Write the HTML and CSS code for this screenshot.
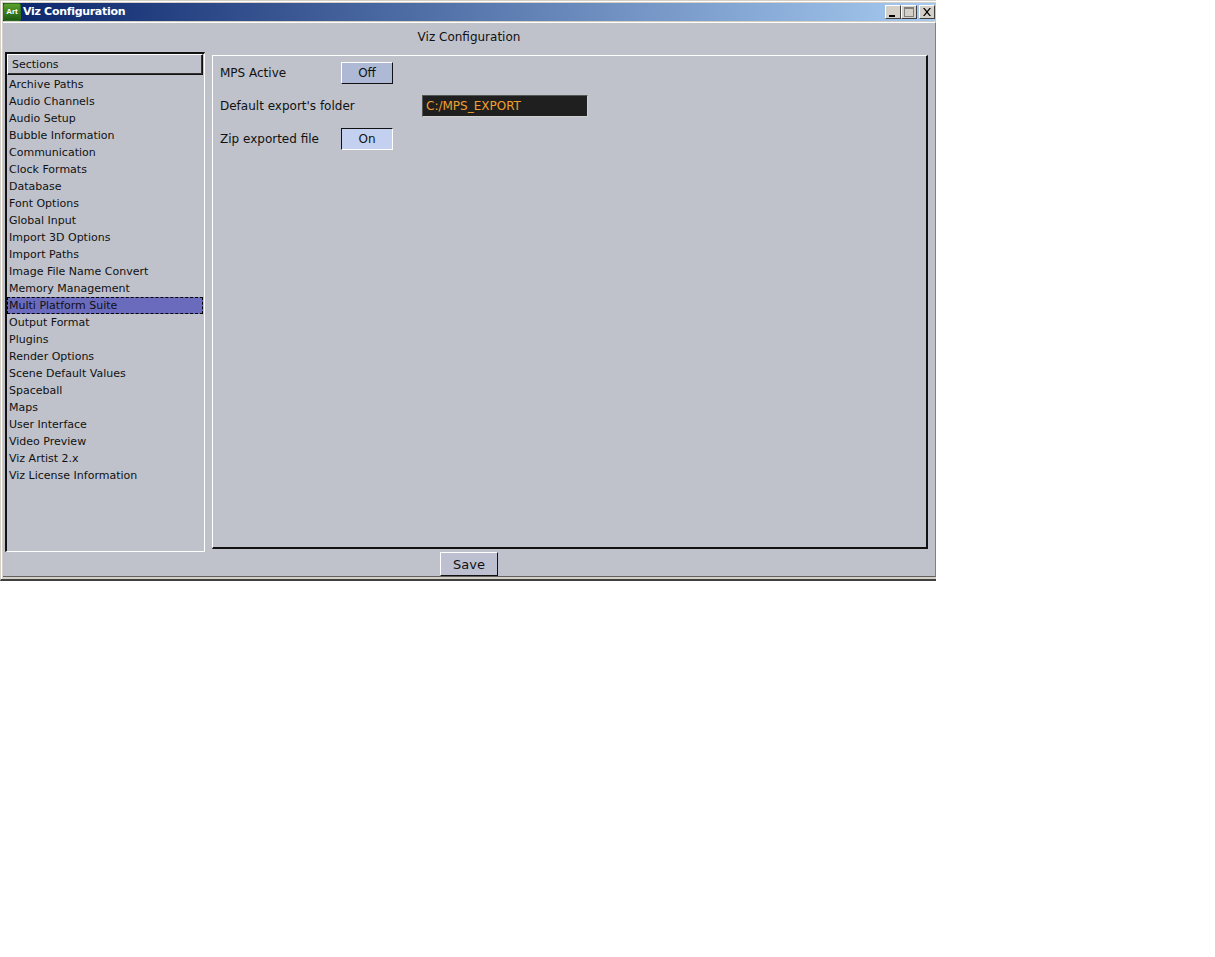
FILE: index.html
```html
<!DOCTYPE html>
<html lang="en">
<head>
<meta charset="utf-8">
<title>Viz Configuration</title>
<link rel="stylesheet" href="styles.css">
</head>
<body>
<div class="window">
  <div class="titlebar">
    <div class="appicon">Art</div>
    <div class="wintitle">Viz Configuration</div>
    <div class="winbtns">
      <div class="winbtn"><svg width="14" height="12" viewBox="0 0 14 12"><rect x="3" y="9" width="6" height="2" fill="#000"/></svg></div>
      <div class="winbtn"><svg width="14" height="12" viewBox="0 0 14 12"><rect x="2.5" y="1.5" width="9" height="9" fill="none" stroke="#808080"/><rect x="2" y="1" width="10" height="2" fill="#808080"/><rect x="4" y="4" width="7" height="6" fill="none" stroke="#fff" stroke-width="0"/></svg></div>
      <div class="winbtn close"><svg width="14" height="12" viewBox="0 0 14 12"><path d="M3 2l1.5 0 2.5 3 2.500-3 1.500 0-3.200 4 3.200 4-1.500 0-2.500-3-2.500 3-1.500 0 3.200-4z" fill="#000"/></svg></div>
    </div>
  </div>
  <div class="client">
    <div class="heading">Viz Configuration</div>
    <div class="main">
      <div class="sidebar">
        <div class="sideheader">Sections</div>
        <ul class="list">
          <li>Archive Paths</li>
          <li>Audio Channels</li>
          <li>Audio Setup</li>
          <li>Bubble Information</li>
          <li>Communication</li>
          <li>Clock Formats</li>
          <li>Database</li>
          <li>Font Options</li>
          <li>Global Input</li>
          <li>Import 3D Options</li>
          <li>Import Paths</li>
          <li>Image File Name Convert</li>
          <li>Memory Management</li>
          <li class="selected">Multi Platform Suite</li>
          <li>Output Format</li>
          <li>Plugins</li>
          <li>Render Options</li>
          <li>Scene Default Values</li>
          <li>Spaceball</li>
          <li>Maps</li>
          <li>User Interface</li>
          <li>Video Preview</li>
          <li>Viz Artist 2.x</li>
          <li>Viz License Information</li>
        </ul>
      </div>
      <div class="panel">
        <div class="row">
          <span class="label">MPS Active</span>
          <span class="toggle off">Off</span>
        </div>
        <div class="row">
          <span class="label wide">Default export's folder</span>
          <span class="field">C:/MPS_EXPORT</span>
        </div>
        <div class="row">
          <span class="label">Zip exported file</span>
          <span class="toggle on">On</span>
        </div>
      </div>
    </div>
    <div class="footer"><span class="save">Save</span></div>
  </div>
</div>
</body>
</html>
```
FILE: styles.css
```css
* { box-sizing: border-box; }
html, body { margin: 0; padding: 0; background: #fff; }
body { font-family: "DejaVu Sans", Verdana, sans-serif; font-size: 11px; color: #111; }

.window {
  width: 936px;
  height: 581px;
  display: flex;
  flex-direction: column;
  background: #d4d0c8;
  border-top: 1px solid #d4d0c8;
  border-left: 1px solid #d4d0c8;
  border-right: 0;
  border-bottom: 2px solid #404040;
  padding: 2px 0 2px 2px;
  box-shadow: inset 1px 1px 0 #fff;
}

.titlebar {
  height: 18px;
  flex: none;
  display: flex;
  align-items: center;
  background: linear-gradient(90deg, #0a246a, #a6caf0);
}
.appicon {
  width: 18px;
  height: 18px;
  margin-right: 2px;
  background: linear-gradient(180deg, #5aa02c, #1f5a12);
  border: 1px solid #2c6a1c;
  border-radius: 2px;
  color: #fff;
  font: bold 8px/15px "Liberation Sans", sans-serif;
  text-align: center;
}
.wintitle {
  flex: 1;
  color: #fff;
  font: bold 11px/18px "DejaVu Sans", sans-serif;
  letter-spacing: -0.3px;
}
.winbtns { display: flex; align-items: center; padding-right: 1px; }
.winbtn {
  width: 16px;
  height: 14px;
  background: #d4d0c8;
  border: 1px solid;
  border-color: #fff #404040 #404040 #fff;
  display: flex;
}
.winbtn.close { margin-left: 2px; }

.client {
  flex: 1;
  margin-top: 1px;
  display: flex;
  flex-direction: column;
  background: #bfc2cb;
  border-top: 1px solid #fff;
  border-right: 1px solid #808080;
  border-bottom: 1px solid #606060;
  min-height: 0;
}

.heading {
  height: 29px;
  flex: none;
  text-align: center;
  font-size: 12px;
  line-height: 29px;
  padding-right: 0;
}

.main {
  height: 500px;
  flex: none;
  display: flex;
  align-items: flex-start;
  padding-left: 2px;
}

.sidebar {
  width: 200px;
  height: 500px;
  flex: none;
  border: 2px solid;
  border-color: #111 #111 #fff #111;
  border-right: 1px solid #fff;
  border-bottom: 1px solid #fff;
}
.sideheader {
  width: 196px;
  height: 21px;
  padding-left: 4px;
  line-height: 20px;
  border: 1px solid;
  border-color: #fff #111 #111 #fff;
  box-shadow: inset -1px -1px 0 #333;
}
.list { list-style: none; margin: 1px 0 0; padding: 0; }
.list li {
  width: 196px;
  height: 17px;
  line-height: 17px;
  padding-left: 2px;
  white-space: nowrap;
}
.list .selected {
  background: #6b6bbd;
  outline: 1px dashed #000;
  outline-offset: -1px;
  box-shadow: 0 0 0 0 #6b6bbd;
}

.panel {
  width: 716px;
  height: 494px;
  flex: none;
  margin: 3px 0 0 7px;
  padding: 6px 0 0 7px;
  border: 2px solid;
  border-color: #fff #111 #111 #fff;
  border-top-width: 1px;
  border-left-width: 1px;
}
.row {
  display: flex;
  align-items: center;
  height: 22px;
  margin-bottom: 11px;
  font-size: 12px;
}
.label { width: 121px; flex: none; }
.label.wide { width: 202px; }
.toggle {
  width: 52px;
  height: 22px;
  text-align: center;
  line-height: 20px;
  border: 1px solid;
}
.toggle.off { background: #adb9d5; border-color: #fff #111 #111 #fff; }
.toggle.on { background: #c3d0f0; border-color: #111 #fff #fff #111; }
.field {
  width: 166px;
  height: 22px;
  padding-left: 3px;
  background: #1f1f1f;
  color: #f0a030;
  line-height: 20px;
  border: 1px solid;
  border-color: #555 #d0d0d0 #d0d0d0 #555;
}

.footer {
  height: 24px;
  display: flex;
  justify-content: center;
  padding-right: 0;
  margin-top: 0;
}
.save {
  width: 58px;
  height: 24px;
  text-align: center;
  font-size: 13px;
  line-height: 23px;
  background: #bdc0d0;
  border: 1px solid;
  border-color: #fff #111 #111 #fff;
}
```
